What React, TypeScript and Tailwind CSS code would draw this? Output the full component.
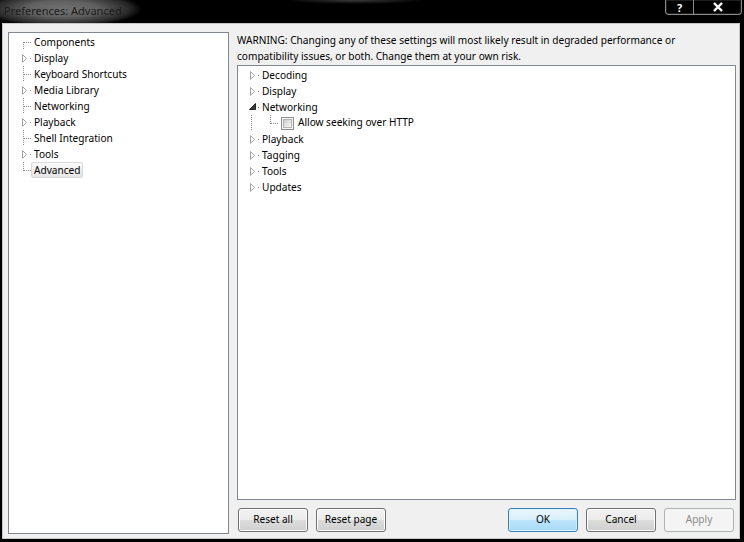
import type { ReactNode } from "react";

type Page = { label: string; folder?: boolean; selected?: boolean };

const pages: Page[] = [
  { label: "Components" },
  { label: "Display", folder: true },
  { label: "Keyboard Shortcuts" },
  { label: "Media Library", folder: true },
  { label: "Networking" },
  { label: "Playback", folder: true },
  { label: "Shell Integration" },
  { label: "Tools", folder: true },
  { label: "Advanced", selected: true },
];

const dot = {
  stroke: "#8c8c8c",
  strokeDasharray: "1 1",
  shapeRendering: "crispEdges" as const,
};

// tree connector + expander glyph, 21px wide like the win7 tree view
function Branch({
  folder,
  open,
  first,
  last,
}: {
  folder?: boolean;
  open?: boolean;
  first?: boolean;
  last?: boolean;
}) {
  return (
    <svg width="21" height="16" className="shrink-0">
      {folder ? (
        <>
          <line x1="20" y1="8.5" x2="21" y2="8.5" {...dot} />
          {open ? (
            <path d="M17.5 4.5V10.5H11.5Z" fill="#3a3a3a" stroke="#262626" />
          ) : (
            <path d="M12.5 4.5V12.5L16.5 8.5Z" fill="#fff" stroke="#a6a6a6" />
          )}
        </>
      ) : (
        <>
          <line x1="13.5" y1={first ? 8 : 0} x2="13.5" y2={last ? 9 : 16} {...dot} />
          <line x1="14" y1="8.5" x2="21" y2="8.5" {...dot} />
        </>
      )}
    </svg>
  );
}

function Label({ children, selected }: { children: ReactNode; selected?: boolean }) {
  return (
    <span
      className={`h-[16px] px-[2px] border rounded-[2px] leading-[14px] whitespace-nowrap ${
        selected
          ? "border-[#d9d9d9] bg-[linear-gradient(#fafafa,#e6e6e6)]"
          : "border-transparent"
      }`}
    >
      {children}
    </span>
  );
}

function Button({ children, kind }: { children: ReactNode; kind?: "default" | "disabled" }) {
  const look =
    kind === "default"
      ? "border-[#3c7fb1] bg-[linear-gradient(#eaf6fd_0%,#d9f0fc_50%,#bee6fd_50%,#a7d9f5_100%)] text-black shadow-[inset_0_0_0_1px_#d6f1ff]"
      : kind === "disabled"
        ? "border-[#adb2b5] bg-[#f4f4f4] text-[#8a8a8a]"
        : "border-[#707070] bg-[linear-gradient(#f2f2f2_0%,#ebebeb_50%,#dddddd_50%,#cfcfcf_100%)] text-black shadow-[inset_0_0_0_1px_#fcfcfc]";
  return (
    <button
      type="button"
      className={`w-[70px] h-[24px] rounded-[3px] border flex items-center justify-center ${look}`}
    >
      {children}
    </button>
  );
}

function Checkbox() {
  return (
    <div className="w-[13px] h-[13px] shrink-0 border border-[#8f8f8f] bg-[#f4f4f4] p-[1px]">
      <div className="w-full h-full border border-[#b4b4b4] bg-[linear-gradient(135deg,#cdcdcd,#f8f8f8)]" />
    </div>
  );
}

export default function App() {
  return (
    <div className="w-[744px] h-[542px] bg-black flex flex-col font-['Noto_Sans',sans-serif] text-[10.1px] text-black overflow-hidden">
      {/* title bar */}
      <div className="h-[23px] shrink-0 flex items-start justify-between bg-[radial-gradient(ellipse_80px_18px_at_62px_9px,#727272_0%,#606060_45%,#262626_85%,transparent_100%),radial-gradient(ellipse_70px_4px_at_355px_0px,#3c3c3c,transparent)]">
        <span className="ml-[4px] mt-[4px] h-[13px] leading-[13px] text-[11px] text-[#1c1c1c] whitespace-nowrap">
          Preferences: Advanced
        </span>
        <div className="mr-[2px] flex h-[15px] rounded-b-[4px] border border-t-0 border-[#8a8a8a] shadow-[inset_0_0_0_1px_rgba(255,255,255,0.12)]">
          <div className="w-[28px] border-r border-[#8a8a8a] flex items-center justify-center text-white text-[11px] font-bold leading-none">
            ?
          </div>
          <div className="w-[47px] flex items-center justify-center">
            <svg width="12" height="10" viewBox="0 0 12 10">
              <path d="M2 1L10 9M10 1L2 9" stroke="#1a1a1a" strokeWidth="4" />
              <path d="M2 1L10 9M10 1L2 9" stroke="#fff" strokeWidth="2.2" />
            </svg>
          </div>
        </div>
      </div>

      {/* dialog body */}
      <div className="ml-[2px] mr-[4px] mb-[3px] flex-1 border border-[#c8c8c8] bg-[#f0f0f0] flex pt-[8px] pl-[5px] pr-[3px] pb-[4px]">
        {/* page tree */}
        <div className="w-[221px] shrink-0 border border-[#828790] bg-white pt-[1px] pl-[1px]">
          {pages.map((p, i) => (
            <div key={p.label} className="h-[16px] flex items-center">
              <Branch folder={p.folder} first={i === 0} last={i === pages.length - 1} />
              <Label selected={p.selected}>{p.label}</Label>
            </div>
          ))}
        </div>

        <div className="ml-[8px] flex-1 flex flex-col">
          <p className="leading-[16px] whitespace-nowrap">
            WARNING: Changing any of these settings will most likely result in degraded performance or
            <br />
            compatibility issues, or both. Change them at your own risk.
          </p>

          {/* advanced settings tree */}
          <div className="mt-[1px] flex-1 border border-[#828790] bg-white pt-[1px]">
            {["Decoding", "Display", "Networking"].map((s) => (
              <div key={s} className="h-[16px] flex items-center">
                <Branch folder open={s === "Networking"} />
                <Label>{s}</Label>
              </div>
            ))}
            <div className="h-[16px] flex items-center">
              <svg width="43" height="16" className="shrink-0">
                <line x1="13.5" y1="0" x2="13.5" y2="16" {...dot} />
                <line x1="32.5" y1="0" x2="32.5" y2="9" {...dot} />
                <line x1="33" y1="8.5" x2="41" y2="8.5" {...dot} />
              </svg>
              <Checkbox />
              <span className="ml-[1px]">
                <Label>Allow seeking over HTTP</Label>
              </span>
            </div>
            {["Playback", "Tagging", "Tools", "Updates"].map((s) => (
              <div key={s} className="h-[16px] flex items-center">
                <Branch folder />
                <Label>{s}</Label>
              </div>
            ))}
          </div>

          <div className="mt-[8px] mb-[2px] flex items-center">
            <div className="ml-[1px] flex gap-[8px]">
              <Button>Reset all</Button>
              <Button>Reset page</Button>
            </div>
            <div className="ml-auto mr-[2px] flex gap-[8px]">
              <Button kind="default">OK</Button>
              <Button>Cancel</Button>
              <Button kind="disabled">Apply</Button>
            </div>
          </div>
        </div>
      </div>
    </div>
  );
}
